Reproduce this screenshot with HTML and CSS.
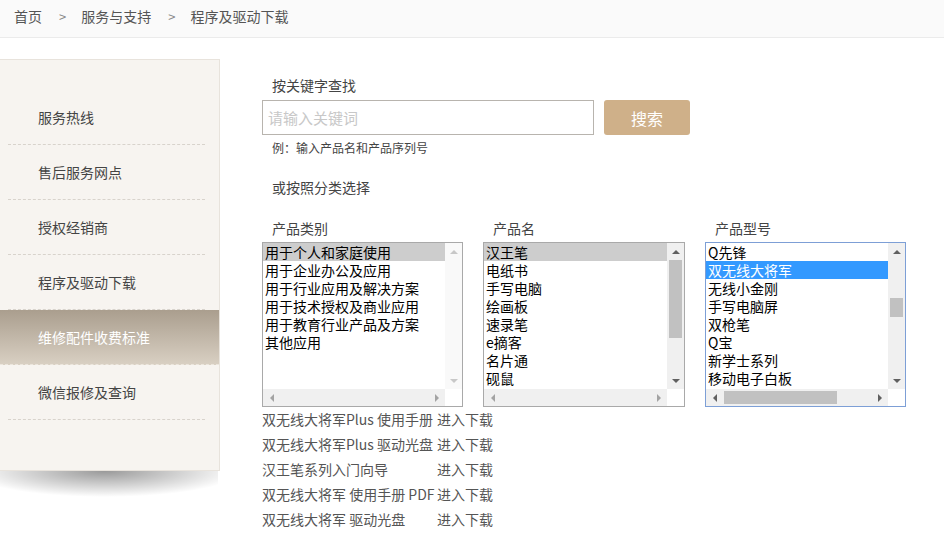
FILE: index.html
```html
<!DOCTYPE html>
<html lang="zh-CN">
<head>
    <meta charset="UTF-8">
    <title>程序及驱动下载</title>
    <link rel="stylesheet" href="styles.css">
</head>
<body>

    <div class="crumbs">
        <a href="#">首页</a><span class="sep">&gt;</span><a href="#">服务与支持</a><span class="sep">&gt;</span><span>程序及驱动下载</span>
    </div>

    <div class="page">
        <div class="side">
            <ul class="side-menu">
                <li><a href="#">服务热线</a></li>
                <li><a href="#">售后服务网点</a></li>
                <li><a href="#">授权经销商</a></li>
                <li><a href="#">程序及驱动下载</a></li>
                <li class="active"><a href="#">维修配件收费标准</a></li>
                <li><a href="#">微信报修及查询</a></li>
            </ul>
            <div class="side-shadow"></div>
        </div>

        <div class="main">
            <div class="label">按关键字查找</div>
            <div class="search-row">
                <input class="search-input" type="text" placeholder="请输入关键词">
                <button class="search-btn">搜索</button>
            </div>
            <div class="hint">例：输入产品名和产品序列号</div>
            <div class="label or">或按照分类选择</div>

            <div class="pickers">
                <div class="picker">
                    <div class="picker-title">产品类别</div>
                    <div class="listbox">
                        <ul class="list">
                            <li class="sel-gray">用于个人和家庭使用</li>
                            <li>用于企业办公及应用</li>
                            <li>用于行业应用及解决方案</li>
                            <li>用于技术授权及商业应用</li>
                            <li>用于教育行业产品及方案</li>
                            <li>其他应用</li>
                        </ul>
                        <div class="vbar off">
                            <span class="arr up"></span>
                            <div class="track"></div>
                            <span class="arr down"></span>
                        </div>
                        <div class="hbar">
                            <span class="arr left"></span>
                            <div class="track"></div>
                            <span class="arr right"></span>
                        </div>
                        <div class="corner"></div>
                    </div>
                </div>

                <div class="picker">
                    <div class="picker-title">产品名</div>
                    <div class="listbox">
                        <ul class="list">
                            <li class="sel-gray">汉王笔</li>
                            <li>电纸书</li>
                            <li>手写电脑</li>
                            <li>绘画板</li>
                            <li>速录笔</li>
                            <li>e摘客</li>
                            <li>名片通</li>
                            <li>砚鼠</li>
                            <li>签字板</li>
                        </ul>
                        <div class="vbar">
                            <span class="arr up"></span>
                            <div class="track"><div class="thumb thumb-name"></div></div>
                            <span class="arr down"></span>
                        </div>
                        <div class="hbar">
                            <span class="arr left"></span>
                            <div class="track"></div>
                            <span class="arr right"></span>
                        </div>
                        <div class="corner"></div>
                    </div>
                </div>

                <div class="picker">
                    <div class="picker-title">产品型号</div>
                    <div class="listbox focus">
                        <ul class="list">
                            <li>Q先锋</li>
                            <li class="sel-blue">双无线大将军</li>
                            <li>无线小金刚</li>
                            <li>手写电脑屏</li>
                            <li>双枪笔</li>
                            <li>Q宝</li>
                            <li>新学士系列</li>
                            <li>移动电子白板</li>
                        </ul>
                        <div class="vbar">
                            <span class="arr up"></span>
                            <div class="track"><div class="thumb thumb-model"></div></div>
                            <span class="arr down"></span>
                        </div>
                        <div class="hbar">
                            <span class="arr left"></span>
                            <div class="track"><div class="hthumb"></div></div>
                            <span class="arr right"></span>
                        </div>
                        <div class="corner"></div>
                    </div>
                </div>
            </div>

            <ul class="downloads">
                <li><span class="doc">双无线大将军Plus 使用手册</span><a href="#">进入下载</a></li>
                <li><span class="doc">双无线大将军Plus 驱动光盘</span><a href="#">进入下载</a></li>
                <li><span class="doc">汉王笔系列入门向导</span><a href="#">进入下载</a></li>
                <li><span class="doc">双无线大将军 使用手册 PDF</span><a href="#">进入下载</a></li>
                <li><span class="doc">双无线大将军 驱动光盘</span><a href="#">进入下载</a></li>
            </ul>
        </div>
    </div>

</body>
</html>
```

FILE: styles.css
```css
body {
    margin: 0;
    font-family: "Noto Sans CJK SC", "Noto Sans", sans-serif;
    font-size: 14px;
    color: #555;
    background: #fff;
    overflow: hidden;
}

a {
    color: inherit;
    text-decoration: none;
}

ul {
    list-style: none;
    margin: 0;
    padding: 0;
}

/* breadcrumb bar */
.crumbs {
    height: 37px;
    line-height: 32px;
    padding-left: 14px;
    background-color: #fafafa;
    border-bottom: 1px solid #ebebeb;
    color: #555;
}

.crumbs .sep {
    margin: 0 15px 0 17px;
    color: #888;
    font-size: 13px;
}

.page {
    display: flex;
    margin-top: 21px;
}

/* left menu */
.side {
    width: 220px;
    flex-shrink: 0;
}

.side-menu {
    background-color: #f7f4f0;
    border: 1px solid #e8e3dc;
    border-left: none;
    padding: 30px 0 50px;
}

.side-menu li {
    position: relative;
    height: 55px;
    line-height: 54px;
    padding-left: 38px;
    color: #444;
}

.side-menu li::after {
    content: "";
    position: absolute;
    left: 8px;
    right: 14px;
    bottom: 0;
    border-bottom: 1px dashed #d8d3cc;
}

.side-menu li.active {
    color: #fff;
    background: linear-gradient(to bottom, #aa9e8e, #d9d0c3);
}

.side-menu li.active::after {
    left: 0;
    right: 0;
    border-bottom-color: #ece6dd;
}

.side-shadow {
    height: 26px;
    margin-right: 2px;
    background: radial-gradient(ellipse 62% 100% at 48% 0, rgba(0, 0, 0, 0.4), rgba(0, 0, 0, 0) 100%);
}

/* main area */
.main {
    padding-left: 42px;
    padding-top: 16px;
    width: 660px;
}

.label {
    padding-left: 10px;
    line-height: 20px;
    color: #444;
}

.search-row {
    display: flex;
    margin-top: 5px;
}

.search-input {
    width: 332px;
    height: 35px;
    box-sizing: border-box;
    border: 1px solid #b8b4ae;
    padding: 0 5px;
    font-family: inherit;
    font-size: 15px;
    color: #333;
    outline: none;
}

.search-input::placeholder {
    color: #c8c8c8;
}

.search-btn {
    width: 86px;
    height: 35px;
    margin-left: 10px;
    border: none;
    border-radius: 3px;
    background-color: #cfb089;
    color: #fff;
    font-family: inherit;
    font-size: 16px;
    cursor: pointer;
}

.hint {
    padding-left: 10px;
    margin-top: 4px;
    font-size: 12px;
    line-height: 18px;
    color: #444;
}

.label.or {
    margin-top: 20px;
}

/* three list boxes */
.pickers {
    display: flex;
    gap: 20px;
    margin-top: 21px;
}

.picker-title {
    padding-left: 10px;
    line-height: 20px;
    color: #444;
    margin-bottom: 4px;
}

.listbox {
    width: 201px;
    height: 165px;
    box-sizing: border-box;
    border: 1px solid #a9a9a9;
    background: #fff;
    display: grid;
    grid-template-columns: 1fr 17px;
    grid-template-rows: 1fr 17px;
}

.picker:nth-child(2) .listbox {
    width: 202px;
}

.listbox.focus {
    border-color: #7d9fd6;
}

.list {
    overflow: hidden;
    font-size: 14px;
    line-height: 18px;
    color: #000;
}

.list li {
    padding-left: 2px;
    white-space: nowrap;
}

.list li.sel-gray {
    background-color: #cdcdcd;
}

.list li.sel-blue {
    background-color: #3399ff;
    color: #fff;
}

/* fake scrollbars */
.vbar {
    display: flex;
    flex-direction: column;
    background-color: #f0f0f0;
}

.vbar.off {
    background-color: #f9f9f9;
}

.hbar {
    display: flex;
    background-color: #f0f0f0;
}

.track {
    flex: 1;
    display: flex;
}

.vbar .track {
    flex-direction: column;
}

.corner {
    background: #fff;
}

.arr {
    width: 17px;
    height: 17px;
    flex-shrink: 0;
    display: flex;
    align-items: center;
    justify-content: center;
}

.arr::before {
    content: "";
    width: 0;
    height: 0;
}

.arr.up::before {
    border-left: 4px solid transparent;
    border-right: 4px solid transparent;
    border-bottom: 4px solid #606060;
}

.arr.down::before {
    border-left: 4px solid transparent;
    border-right: 4px solid transparent;
    border-top: 4px solid #606060;
}

.arr.left::before {
    border-top: 4px solid transparent;
    border-bottom: 4px solid transparent;
    border-right: 4px solid #a3a3a3;
}

.arr.right::before {
    border-top: 4px solid transparent;
    border-bottom: 4px solid transparent;
    border-left: 4px solid #a3a3a3;
}

.vbar.off .arr.up::before {
    border-bottom-color: #c8c8c8;
}

.vbar.off .arr.down::before {
    border-top-color: #c8c8c8;
}

.focus .arr.left::before {
    border-right-color: #606060;
}

.focus .arr.right::before {
    border-left-color: #606060;
}

.thumb {
    margin: 0 2px;
    background-color: #c1c1c1;
}

.thumb-name {
    height: 78px;
}

.thumb-model {
    margin-top: 38px;
    height: 19px;
}

.hthumb {
    margin: 2px 0 2px 1px;
    width: 113px;
    background-color: #c1c1c1;
}

/* download links */
.downloads li {
    line-height: 25px;
    color: #555;
    white-space: nowrap;
}

.downloads .doc {
    display: inline-block;
    min-width: 175px;
}
```
